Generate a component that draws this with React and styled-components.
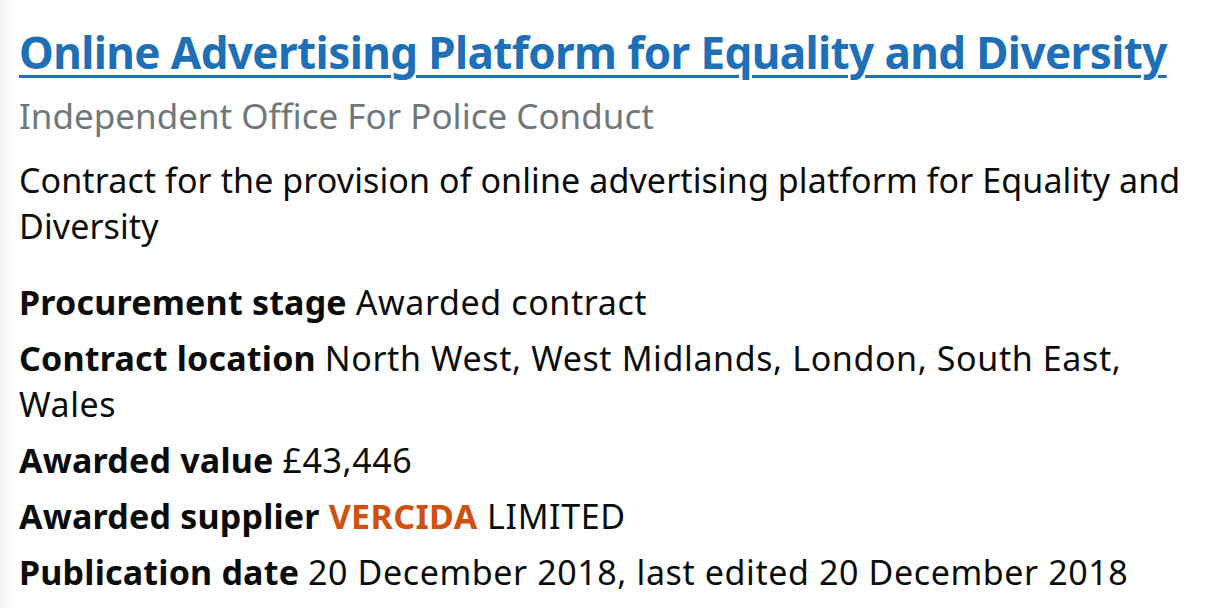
import React from 'react';
import styled, { createGlobalStyle } from 'styled-components';

const GlobalStyle = createGlobalStyle`
  html, body {
    margin: 0;
    padding: 0;
  }
  body {
    background: linear-gradient(to right, #f3f3f3 0px, #ffffff 14px);
    font-family: "Noto Sans", "Open Sans", Arial, sans-serif;
    color: #0b0c0c;
  }
`;

const Result = styled.article`
  padding: 22px 0 0 19px;
  width: 1180px;
`;

const Title = styled.h2`
  margin: 0;
  font-size: 44px;
  line-height: 60px;
  font-weight: 700;
  letter-spacing: -0.6px;

  a {
    color: #1d70b8;
    text-decoration: underline;
    text-decoration-thickness: 3px;
    text-underline-offset: 6px;
  }
`;

const Organisation = styled.p`
  margin: 11px 0 0;
  font-size: 35px;
  line-height: 46px;
  color: #6f777b;
`;

const Description = styled.p`
  margin: 18px 0 0;
  font-size: 34px;
  line-height: 46px;
  letter-spacing: 0.1px;
`;

const Details = styled.dl`
  margin: 30px 0 0;
  display: flex;
  flex-direction: column;
  gap: 10px;
`;

const Row = styled.div`
  font-size: 34px;
  line-height: 46px;
`;

const Label = styled.dt`
  display: inline;
  font-weight: 700;
  letter-spacing: 0.2px;
`;

const Value = styled.dd`
  display: inline;
  margin: 0;
  letter-spacing: 0.6px;
`;

const Highlight = styled.strong`
  color: #d0500f;
  font-weight: 700;
  letter-spacing: 0.4px;
`;

const rows = [
  { label: 'Procurement stage', value: 'Awarded contract' },
  { label: 'Contract location', value: 'North West, West Midlands, London, South East, Wales' },
  { label: 'Awarded value', value: '£43,446' },
  {
    label: 'Awarded supplier',
    value: (
      <>
        <Highlight>VERCIDA</Highlight> LIMITED
      </>
    ),
  },
  { label: 'Publication date', value: '20 December 2018, last edited 20 December 2018' },
];

export default function App() {
  return (
    <>
      <GlobalStyle />
      <Result>
        <Title>
          <a href="#">Online Advertising Platform for Equality and Diversity</a>
        </Title>
        <Organisation>Independent Office For Police Conduct</Organisation>
        <Description>
          Contract for the provision of online advertising platform for Equality and Diversity
        </Description>
        <Details>
          {rows.map((r) => (
            <Row key={r.label}>
              <Label>{r.label}</Label> <Value>{r.value}</Value>
            </Row>
          ))}
        </Details>
      </Result>
    </>
  );
}
